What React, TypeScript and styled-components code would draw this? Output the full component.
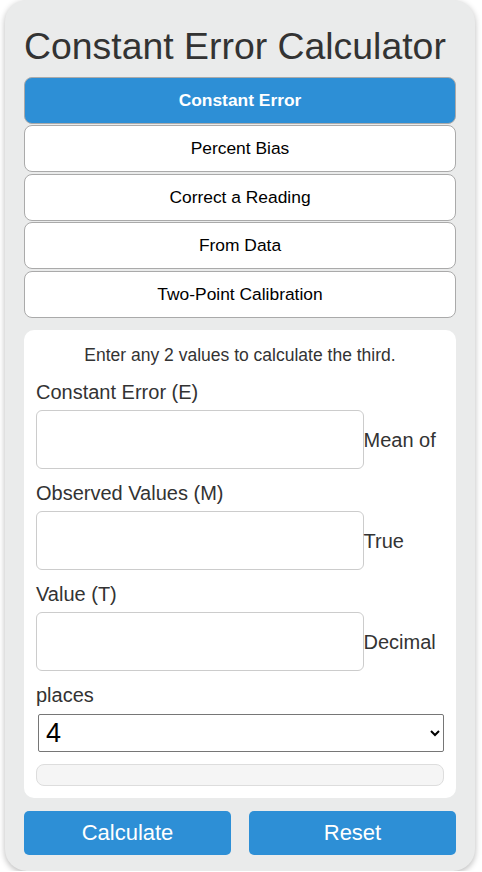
import React from "react";
import styled, { createGlobalStyle } from "styled-components";

const Global = createGlobalStyle`
  html, body { margin: 0; padding: 0; background: #ffffff; }
  body { font-family: "Liberation Sans", Arial, sans-serif; }
  * { box-sizing: border-box; }
`;

const Card = styled.div`
  width: 470px;
  margin: 0 0 0 5px;
  padding: 25px 19px 16px;
  background: #eaebeb;
  border-radius: 22px;
  box-shadow: 0 2px 6px rgba(0, 0, 0, 0.28);
`;

const Title = styled.h1`
  margin: 0 0 9px;
  font-size: 37.4px;
  font-weight: 400;
  line-height: normal;
  color: #333333;
  white-space: nowrap;
`;

const Tabs = styled.div`
  display: flex;
  flex-direction: column;
  gap: 1.4px;
`;

const Tab = styled.button<{ $active?: boolean }>`
  height: 47px;
  width: 100%;
  border: 1px solid #aaaaaa;
  border-radius: 8px;
  background: ${(p) => (p.$active ? "#2d8fd6" : "#ffffff")};
  color: ${(p) => (p.$active ? "#ffffff" : "#000000")};
  font-family: "Liberation Sans", Arial, sans-serif;
  font-size: 17.4px;
  font-weight: ${(p) => (p.$active ? 700 : 400)};
  padding: 0;
  cursor: pointer;
`;

const Panel = styled.div`
  margin-top: 12.3px;
  background: #ffffff;
  border-radius: 10px;
  padding: 12px;
  display: flex;
  flex-direction: column;
`;

const Intro = styled.p`
  margin: 0;
  text-align: center;
  font-size: 17.5px;
  line-height: 26px;
  color: #333333;
`;

const Label = styled.div`
  margin-top: 12px;
  margin-bottom: 6px;
  font-size: 20px;
  line-height: 24px;
  color: #333333;
  white-space: nowrap;
`;

const FieldRow = styled.div`
  display: flex;
  align-items: center;
`;

const Input = styled.input`
  width: 327.5px;
  height: 59px;
  border: 1px solid #cccccc;
  border-radius: 6px;
  background: #ffffff;
  font-size: 20px;
  padding: 0 10px;
  flex: none;
`;

const Trailing = styled.span`
  font-size: 20px;
  color: #333333;
  padding-top: 3px;
  white-space: nowrap;
`;

const Select = styled.select`
  margin: 1px 0 0 2px;
  width: calc(100% - 2px);
  height: 38px;
  border: 1px solid #767676;
  border-radius: 2px;
  background: #ffffff;
  color: #000000;
  font-family: "Liberation Sans", Arial, sans-serif;
  font-size: 27px;
  padding: 0 3px;
`;

const Result = styled.div`
  margin-top: 12px;
  height: 22px;
  background: #f5f5f5;
  border: 1px solid #dddddd;
  border-radius: 8px;
`;

const Actions = styled.div`
  margin-top: 13px;
  display: grid;
  grid-template-columns: 1fr 1fr;
  gap: 18px;
`;

const ActionButton = styled.button`
  height: 44px;
  border: none;
  border-radius: 5px;
  background: #2d8fd6;
  color: #ffffff;
  font-family: "Liberation Sans", Arial, sans-serif;
  font-size: 22px;
  cursor: pointer;
`;

const tabs = [
  "Constant Error",
  "Percent Bias",
  "Correct a Reading",
  "From Data",
  "Two-Point Calibration",
];

export default function App() {
  return (
    <>
      <Global />
      <Card>
        <Title>Constant Error Calculator</Title>
        <Tabs>
          {tabs.map((t, i) => (
            <Tab key={t} $active={i === 0}>
              {t}
            </Tab>
          ))}
        </Tabs>
        <Panel>
          <Intro>Enter any 2 values to calculate the third.</Intro>
          <Label>Constant Error (E)</Label>
          <FieldRow>
            <Input type="text" />
            <Trailing>Mean of</Trailing>
          </FieldRow>
          <Label>Observed Values (M)</Label>
          <FieldRow>
            <Input type="text" />
            <Trailing>True</Trailing>
          </FieldRow>
          <Label>Value (T)</Label>
          <FieldRow>
            <Input type="text" />
            <Trailing>Decimal</Trailing>
          </FieldRow>
          <Label>places</Label>
          <Select defaultValue="4">
            <option value="0">0</option>
            <option value="1">1</option>
            <option value="2">2</option>
            <option value="3">3</option>
            <option value="4">4</option>
            <option value="5">5</option>
            <option value="6">6</option>
          </Select>
          <Result />
        </Panel>
        <Actions>
          <ActionButton>Calculate</ActionButton>
          <ActionButton>Reset</ActionButton>
        </Actions>
      </Card>
    </>
  );
}
